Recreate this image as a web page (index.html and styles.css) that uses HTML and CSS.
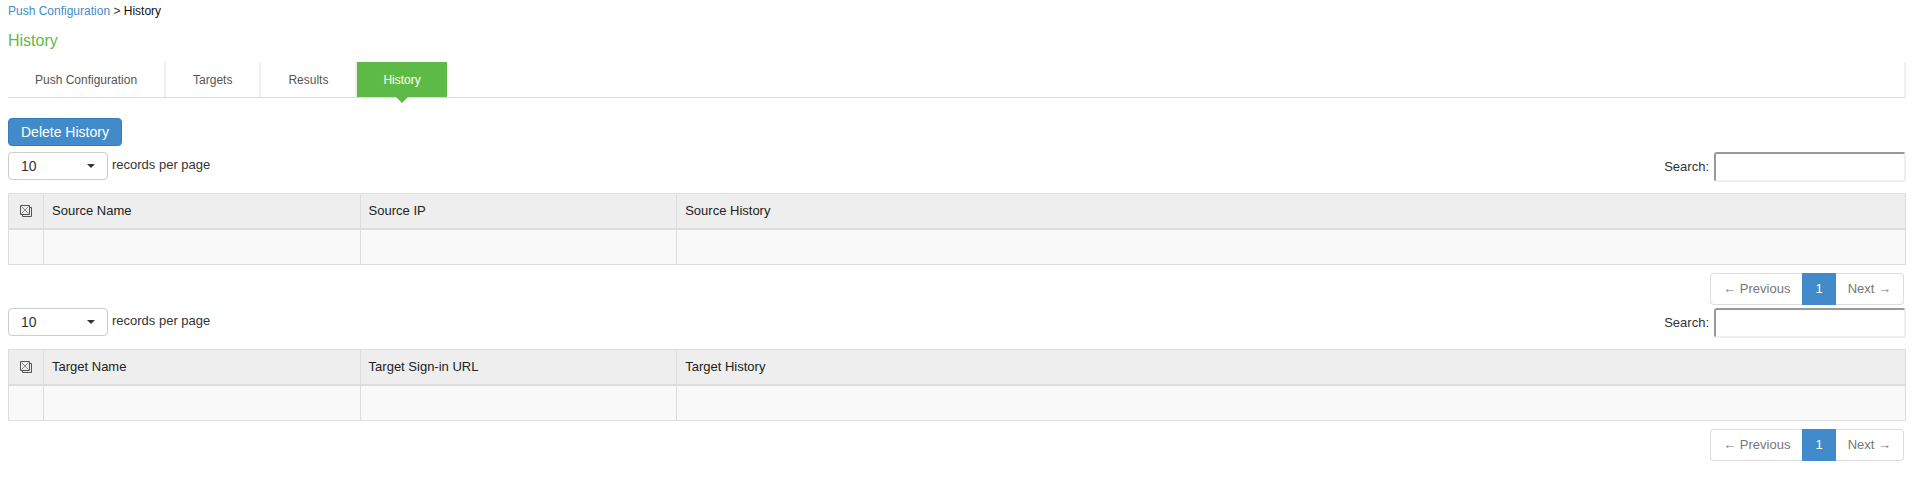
FILE: index.html
```html
<!DOCTYPE html>
<html lang="en">
<head>
<meta charset="utf-8">
<title>Push Configuration History</title>
<link rel="stylesheet" href="styles.css">
</head>
<body>
<nav class="breadcrumb" aria-label="Breadcrumb"><a href="#">Push Configuration</a> &gt; <span class="breadcrumb-current">History</span></nav>
<h1 class="page-title">History</h1>
<nav class="tabs" aria-label="Sections">
  <a class="tab" href="#">Push Configuration</a>
  <a class="tab" href="#">Targets</a>
  <a class="tab" href="#">Results</a>
  <a class="tab tab-active" href="#" aria-current="page">History</a>
</nav>
<main>
  <button class="btn-primary" type="button">Delete History</button>

  <section class="records" aria-label="Source history">
    <div class="toolbar">
      <div class="page-size">
        <span class="select-box"><select class="select" id="source-size"><option>10</option></select></span>
        <label for="source-size">records per page</label>
      </div>
      <div class="search">
        <label for="source-search">Search:</label>
        <input class="search-input" id="source-search" type="text">
      </div>
    </div>
    <table class="grid">
      <colgroup><col class="col-check"><col class="col-name"><col class="col-name"><col></colgroup>
      <thead>
        <tr>
          <th class="cell-check"><button class="select-all" type="button" aria-label="Select all"><svg class="icon" viewBox="0 0 12 12" aria-hidden="true"><path class="icon-frame" d="M.5.5h9v9h-9zM9.500 2.500h2v9h-9v-2"/><path class="icon-cross" d="M1.500 1.500l7 7M8.500 1.500l-7 7"/></svg></button></th>
          <th>Source Name</th><th>Source IP</th><th>Source History</th>
        </tr>
      </thead>
      <tbody><tr><td></td><td></td><td></td><td></td></tr></tbody>
    </table>
    <nav class="pagination" aria-label="Source pages">
      <a class="page" href="#">← Previous</a>
      <a class="page page-active" href="#" aria-current="page">1</a>
      <a class="page" href="#">Next →</a>
    </nav>
  </section>

  <section class="records" aria-label="Target history">
    <div class="toolbar">
      <div class="page-size">
        <span class="select-box"><select class="select" id="target-size"><option>10</option></select></span>
        <label for="target-size">records per page</label>
      </div>
      <div class="search">
        <label for="target-search">Search:</label>
        <input class="search-input" id="target-search" type="text">
      </div>
    </div>
    <table class="grid">
      <colgroup><col class="col-check"><col class="col-name"><col class="col-name"><col></colgroup>
      <thead>
        <tr>
          <th class="cell-check"><button class="select-all" type="button" aria-label="Select all"><svg class="icon" viewBox="0 0 12 12" aria-hidden="true"><path class="icon-frame" d="M.5.5h9v9h-9zM9.500 2.500h2v9h-9v-2"/><path class="icon-cross" d="M1.500 1.500l7 7M8.500 1.500l-7 7"/></svg></button></th>
          <th>Target Name</th><th>Target Sign-in URL</th><th>Target History</th>
        </tr>
      </thead>
      <tbody><tr><td></td><td></td><td></td><td></td></tr></tbody>
    </table>
    <nav class="pagination" aria-label="Target pages">
      <a class="page" href="#">← Previous</a>
      <a class="page page-active" href="#" aria-current="page">1</a>
      <a class="page" href="#">Next →</a>
    </nav>
  </section>
</main>
</body>
</html>
```

FILE: styles.css
```css
* {
  box-sizing: border-box;
}

body {
  margin: 0;
  padding: 2px 7px 0 8px;
  background: #fff;
  color: #333;
  font: 13px/18px "Liberation Sans", Arial, sans-serif;
}

a {
  color: #428bca;
  text-decoration: none;
}

.breadcrumb {
  font-size: 12px;
}

.breadcrumb-current {
  color: #111;
}

.page-title {
  margin: 11px 0;
  color: #5dba46;
  font-size: 16px;
  font-weight: normal;
  line-height: 20px;
}

/* Tabs */
.tabs {
  display: flex;
  border-right: 2px solid #f0f0f0;
  border-bottom: 1px solid #dadada;
  font-size: 12px;
  line-height: 33px;
}

.tab {
  padding: 2px 27px 0;
  border-right: 2px solid #f0f0f0;
  color: #555;
}

.tab-active {
  position: relative;
  padding: 2px 26px 0;
  border-right: 0;
  background: #5dba46;
  color: #fff;
}

.tab-active::after {
  content: "";
  position: absolute;
  top: 100%;
  left: 50%;
  margin-left: -6px;
  border: 6px solid transparent;
  border-top-color: #5dba46;
  border-bottom: 0;
}

/* Controls */
.btn-primary {
  display: block;
  margin: 20px 0 6px;
  padding: 0 12px;
  border: 1px solid #357ebd;
  border-radius: 4px;
  background: #428bca;
  color: #fff;
  font: 14px/26px "Liberation Sans", Arial, sans-serif;
}

.records {
  margin-bottom: 3px;
}

.toolbar {
  display: flex;
  justify-content: space-between;
  margin-bottom: 11px;
}

.page-size {
  display: flex;
  gap: 4px;
  line-height: 26px;
}

.select-box {
  position: relative;
}

.select-box::after {
  content: "";
  position: absolute;
  top: 12px;
  right: 13px;
  border: 4px solid transparent;
  border-top-color: #333;
  border-bottom: 0;
  pointer-events: none;
}

.select {
  display: block;
  appearance: none;
  width: 100px;
  height: 28px;
  padding: 0 12px;
  border: 1px solid #ccc;
  border-radius: 4px;
  background: #fff;
  color: #333;
  font: 14px/26px "Liberation Sans", Arial, sans-serif;
}

.search {
  display: flex;
  align-items: center;
  gap: 5px;
}

.search-input {
  width: 192px;
  height: 30px;
  padding: 0 6px;
  border: 2px solid;
  border-color: #9a9a9a #eee #eee #9a9a9a;
  border-radius: 3px;
  background: #fff;
  font: 13px "Liberation Sans", Arial, sans-serif;
}

/* Tables */
.grid {
  width: 100%;
  border-collapse: collapse;
  table-layout: fixed;
}

.col-check {
  width: 35px;
}

.col-name {
  width: 16.69%;
}

.grid th,
.grid td {
  height: 36px;
  padding: 0 8px;
  border: 1px solid #ddd;
  text-align: left;
}

.grid th {
  height: 35px;
  border-bottom-width: 2px;
  background: #eee;
  color: #222;
  font-weight: normal;
}

.grid td {
  background: #f9f9f9;
}

.grid .cell-check {
  padding: 0;
}

.select-all {
  display: block;
  margin: 0 auto;
  padding: 0;
  border: 0;
  background: none;
}

.icon {
  display: block;
  width: 12px;
  height: 12px;
  fill: none;
}

.icon-frame {
  stroke: #555;
}

.icon-cross {
  stroke: #888;
}

/* Pagination */
.pagination {
  display: flex;
  justify-content: flex-end;
  margin-top: 8px;
  padding-right: 2px;
}

.page {
  padding: 6px 12px;
  border: 1px solid #ddd;
  color: #777;
}

.page:first-child {
  border-right: 0;
  border-radius: 4px 0 0 4px;
}

.page:last-child {
  border-left: 0;
  border-radius: 0 4px 4px 0;
}

.page-active {
  border-color: #428bca;
  background: #428bca;
  color: #fff;
}
```
